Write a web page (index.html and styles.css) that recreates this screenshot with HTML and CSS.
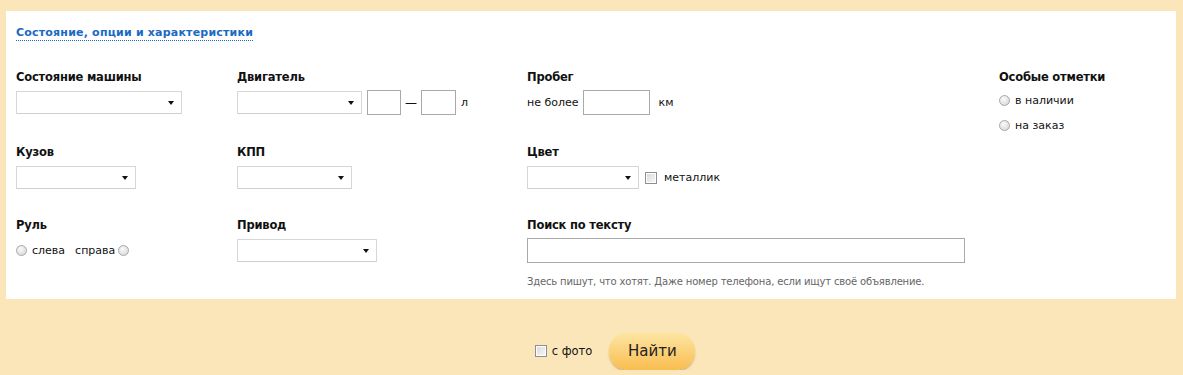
FILE: index.html
```html
<!DOCTYPE html>
<html lang="ru">
<head>
    <meta charset="UTF-8">
    <title>Поиск</title>
    <link rel="stylesheet" href="styles.css">
</head>
<body>
    <div class="search">
        <div class="panel">
            <a href="#" class="section-title">Состояние, опции и характеристики</a>
            <div class="fields">
                <div class="field">
                    <div class="label">Состояние машины</div>
                    <div class="line"><span class="select w166"></span></div>
                </div>
                <div class="field">
                    <div class="label">Двигатель</div>
                    <div class="line">
                        <span class="select w125"></span>
                        <span class="input w34 ml5"></span>
                        <span class="dash">—</span>
                        <span class="input w35"></span>
                        <span class="unit">л</span>
                    </div>
                </div>
                <div class="field">
                    <div class="label">Пробег</div>
                    <div class="line">
                        <span class="text">не более</span>
                        <span class="input w67 ml4"></span>
                        <span class="text ml9">км</span>
                    </div>
                </div>
                <div class="field special">
                    <div class="label">Особые отметки</div>
                    <label class="option"><span class="radio"></span>в наличии</label>
                    <label class="option"><span class="radio"></span>на заказ</label>
                </div>

                <div class="field">
                    <div class="label">Кузов</div>
                    <div class="line"><span class="select w120"></span></div>
                </div>
                <div class="field">
                    <div class="label">КПП</div>
                    <div class="line"><span class="select w115"></span></div>
                </div>
                <div class="field">
                    <div class="label">Цвет</div>
                    <div class="line">
                        <span class="select w112"></span>
                        <span class="check ml6"></span>
                        <span class="text ml7">металлик</span>
                    </div>
                </div>

                <div class="field">
                    <div class="label">Руль</div>
                    <div class="line">
                        <span class="radio"></span>
                        <span class="text ml5">слева</span>
                        <span class="text ml10">справа</span>
                        <span class="radio ml3"></span>
                    </div>
                </div>
                <div class="field">
                    <div class="label">Привод</div>
                    <div class="line drive-line"><span class="select w140"></span></div>
                </div>
                <div class="field">
                    <div class="label">Поиск по тексту</div>
                    <div class="line text-line"><span class="input w438"></span></div>
                    <div class="hint">Здесь пишут, что хотят. Даже номер телефона, если ищут своё объявление.</div>
                </div>
            </div>
        </div>
        <div class="actions">
            <label class="photo"><span class="check"></span>с фото</label>
            <button class="submit">Найти</button>
        </div>
    </div>
</body>
</html>
```

FILE: styles.css
```css
body {
    margin: 0;
    background: #fbe6b9;
    font-family: "DejaVu Sans", Tahoma, sans-serif;
    font-size: 11px;
    color: #111;
}

.search {
    padding: 11px 7px 0 6px;
}

.panel {
    background: #fff;
    height: 288px;
    padding: 12px 10px 0;
    box-sizing: border-box;
}

.section-title {
    display: inline-block;
    margin-top: 2px;
    color: #1a6ac3;
    font-weight: bold;
    font-size: 11px;
    letter-spacing: 0.2px;
    text-decoration: none;
    border-bottom: 1px dotted #1a6ac3;
    line-height: 15px;
}

.fields {
    display: grid;
    grid-template-columns: 221px 290px 472px 1fr;
    grid-template-rows: 75px 73px auto;
    margin-top: 29px;
}

.special {
    grid-row: span 3;
}

.label {
    font-weight: bold;
    font-size: 11.5px;
    letter-spacing: -0.2px;
    line-height: 14px;
    height: 14px;
    margin-bottom: 6px;
}

.line {
    display: flex;
    align-items: center;
    height: 25px;
}

.drive-line {
    margin-top: 1px;
}

.text-line {
    margin-top: 2px;
}

.text {
    line-height: 14px;
}

.select {
    position: relative;
    display: inline-block;
    height: 23px;
    border: 1px solid #d6d6d6;
    border-bottom-color: #cfcfcf;
    box-sizing: border-box;
    border-radius: 1px;
}

.select::after {
    content: "";
    position: absolute;
    right: 7px;
    top: 9px;
    border-left: 3px solid transparent;
    border-right: 3px solid transparent;
    border-top: 4px solid #111;
}

.input {
    display: inline-block;
    height: 25px;
    border: 1px solid #a9a9a9;
    box-sizing: border-box;
}

.w166 { width: 166px; }
.w125 { width: 125px; }
.w120 { width: 120px; }
.w115 { width: 115px; }
.w112 { width: 112px; }
.w140 { width: 140px; }
.w34 { width: 34px; }
.w35 { width: 35px; }
.w67 { width: 67px; }
.w438 { width: 438px; }

.ml3 { margin-left: 3px; }
.ml4 { margin-left: 4px; }
.ml5 { margin-left: 5px; }
.ml6 { margin-left: 6px; }
.ml7 { margin-left: 7px; }
.ml9 { margin-left: 9px; }
.ml10 { margin-left: 10px; }

.dash {
    margin: 0 4px;
    font-size: 12px;
}

.unit {
    margin-left: 5px;
}

.radio {
    display: inline-block;
    width: 11px;
    height: 11px;
    border-radius: 50%;
    border: 1px solid #a8a8a8;
    box-sizing: border-box;
    background: radial-gradient(circle at 40% 35%, #fafafa, #d2d2d2);
}

.check {
    display: inline-block;
    width: 12px;
    height: 12px;
    border: 1px solid #8f8f8f;
    box-sizing: border-box;
    background: linear-gradient(135deg, #d9d9d9, #f8f8f8);
    box-shadow: inset 0 0 0 1px #fff;
}

.option {
    display: flex;
    align-items: center;
    height: 14px;
    margin-top: 11px;
}

.option:first-of-type {
    margin-top: 9px;
}

.option .radio {
    margin-right: 5px;
}

.hint {
    margin-top: 13px;
    font-size: 10px;
    letter-spacing: -0.17px;
    color: #666;
}

.actions {
    display: flex;
    justify-content: center;
    align-items: center;
    gap: 17px;
    padding: 33px 0 0 48px;
}

.photo {
    display: flex;
    align-items: center;
    gap: 5px;
    font-size: 11.5px;
}

.submit {
    width: 86px;
    height: 38px;
    border: none;
    border-radius: 19px;
    background: linear-gradient(#fde6a6, #f9bd4f);
    box-shadow: 0 2px 2px rgba(180, 120, 20, 0.45);
    font-family: "DejaVu Sans", Tahoma, sans-serif;
    font-size: 15px;
    color: #222;
    padding: 0;
}
```
